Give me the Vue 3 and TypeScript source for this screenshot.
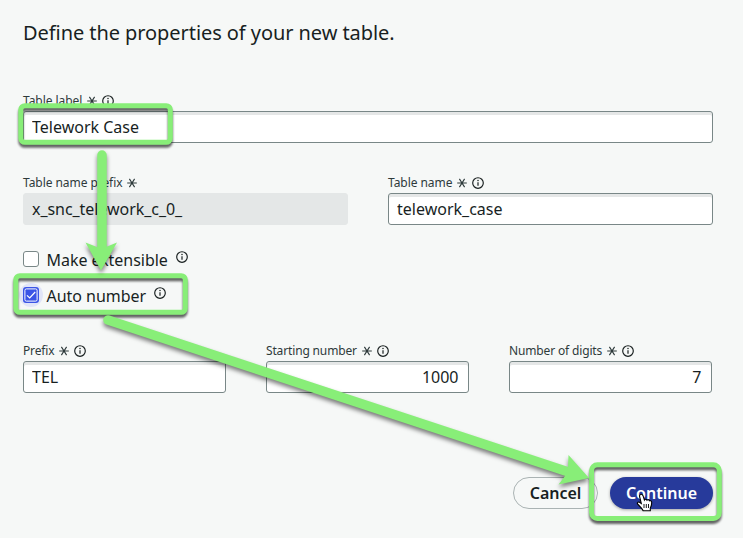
<script setup lang="ts">
import { reactive } from 'vue'

const form = reactive({
  label: 'Telework Case',
  namePrefix: 'x_snc_telework_c_0_',
  name: 'telework_case',
  extensible: false,
  autoNumber: true,
  prefix: 'TEL',
  start: '1000',
  digits: '7',
})
</script>

<template>
  <main class="page">
    <svg class="defs" width="0" height="0" aria-hidden="true">
      <symbol id="info" viewBox="0 0 12 12">
        <circle cx="6" cy="6" r="5.3" fill="none" stroke="currentColor" stroke-width="1.15" />
        <path d="M6 5.2V8.8" stroke="currentColor" stroke-width="1.2" />
        <circle cx="6" cy="3.6" r="0.75" fill="currentColor" />
      </symbol>
      <symbol id="star" viewBox="0 0 10 10">
        <path d="M.2 5H9.8M2.4 .9L7.6 9.1M7.6 .9L2.4 9.1" stroke="currentColor" stroke-width="1.1" fill="none" />
      </symbol>
    </svg>

    <h1>Define the properties of your new table.</h1>

    <div class="row first">
      <div class="field">
        <label class="caption">Table label<svg class="star"><use href="#star" /></svg><svg class="info"><use href="#info" /></svg></label>
        <input v-model="form.label" class="box" type="text" />
      </div>
    </div>

    <div class="row second">
      <div class="field">
        <label class="caption">Table name prefix<svg class="star"><use href="#star" /></svg></label>
        <input v-model="form.namePrefix" class="box locked" type="text" readonly />
      </div>
      <div class="field">
        <label class="caption">Table name<svg class="star"><use href="#star" /></svg><svg class="info"><use href="#info" /></svg></label>
        <input v-model="form.name" class="box" type="text" />
      </div>
    </div>

    <div class="checks">
      <div class="check">
        <span class="tick" role="checkbox" :aria-checked="form.extensible"></span>
        <span class="check-text">Make extensible</span>
        <svg class="info"><use href="#info" /></svg>
      </div>
      <div class="check">
        <span class="tick on" role="checkbox" :aria-checked="form.autoNumber">
          <svg viewBox="0 0 16 16" width="16" height="16">
            <rect x="1.9" y="1.9" width="12.2" height="12.2" rx="1.5" fill="none" stroke="#fff" stroke-width="1" />
            <path d="M4 8.3L6.7 11L12.2 5" fill="none" stroke="#fff" stroke-width="1.2" />
          </svg>
        </span>
        <span class="check-text">Auto number</span>
        <svg class="info"><use href="#info" /></svg>
      </div>
    </div>

    <div class="row third">
      <div class="field">
        <label class="caption tight">Prefix<svg class="star"><use href="#star" /></svg><svg class="info"><use href="#info" /></svg></label>
        <input v-model="form.prefix" class="box" type="text" />
      </div>
      <div class="field">
        <label class="caption tight">Starting number<svg class="star"><use href="#star" /></svg><svg class="info"><use href="#info" /></svg></label>
        <input v-model="form.start" class="box numeric" type="text" />
      </div>
      <div class="field">
        <label class="caption tight">Number of digits<svg class="star"><use href="#star" /></svg><svg class="info"><use href="#info" /></svg></label>
        <input v-model="form.digits" class="box numeric" type="text" />
      </div>
    </div>

    <footer class="actions">
      <button class="btn cancel" type="button">Cancel</button>
      <button class="btn primary" type="button">Continue</button>
    </footer>

    <svg class="overlay" viewBox="0 0 743 538" width="743" height="538" aria-hidden="true">
      <g class="marks">
        <rect x="20.8" y="105.7" width="149.5" height="36.6" rx="4" />
        <rect x="15.8" y="275.7" width="169.5" height="36.6" rx="4" />
        <rect x="591.5" y="464.8" width="127.8" height="53.6" rx="6" />
      </g>
      <g class="arrows">
        <path class="shaft" d="M102 155V252" />
        <path class="head" d="M101 270.5L85.5 242.5L97 247H106L117 242.5Z" />
        <path class="shaft" d="M108 320L570 472.5" />
        <path class="head" d="M589 478L568.5 455L568 467L565 476L558.5 484.5Z" />
      </g>
      <g transform="translate(635.5 493)">
        <path d="M4.8 1.6C6 .8 7.2 1.6 7.6 2.8L8.9 7C9.4 6 11 6 11.5 7.2C12.2 6.4 13.6 6.6 14 7.8C15 7.3 16.2 8 16.2 9.5C16.2 12 15.8 13.5 14.8 15V17.7H7.6C6.8 15.6 4.5 13.6 2.5 11.5C1 10 2.5 8.5 4 9.3L5.8 10.5L4.2 4C3.9 2.9 4 2.1 4.8 1.6Z" fill="#fff" stroke="#000" stroke-width="1.1" />
        <path d="M8.5 11V15M10.8 11V15M13 11V15" stroke="#000" stroke-width="0.9" />
      </g>
    </svg>
  </main>
</template>

<style>
body {
  margin: 0;
  background: #f6f8f7;
}
</style>

<style scoped>
.page {
  position: relative;
  box-sizing: border-box;
  width: 743px;
  height: 538px;
  padding: 19px 30px 0 23px;
  overflow: hidden;
  background: #f6f8f7;
  color: #181f1f;
  font-family: "Noto Sans", sans-serif;
}
.defs { position: absolute; }
h1 {
  margin: 0;
  font-size: 20px;
  line-height: 28px;
  font-weight: 400;
  letter-spacing: -0.07px;
}
.row { display: flex; }
.first { margin-top: 45px; }
.second { gap: 40px; margin-top: 31px; }
.third { gap: 40px; margin: 35px 1px 0 0; }
.field {
  flex: 1 1 0;
  min-width: 0;
  display: flex;
  flex-direction: column;
}
.caption {
  display: flex;
  align-items: center;
  height: 18px;
  margin-bottom: 1px;
  font-size: 12px;
  line-height: 18px;
  letter-spacing: -0.06px;
  color: #2e3a3b;
}
.tight { letter-spacing: -0.15px; }
.star { width: 10px; height: 10px; margin-left: 5px; }
.info { width: 12px; height: 12px; margin-left: 5px; color: #181f1f; }
.box {
  box-sizing: border-box;
  width: 100%;
  height: 32px;
  margin: 0;
  padding: 0 8px;
  border: 1px solid #798787;
  border-radius: 3px;
  outline: 0;
  background: #fff;
  box-shadow: inset 0 3px 0 #e5e7e7;
  color: #181f1f;
  font: 400 16px/24px "Noto Sans", sans-serif;
}
.locked {
  border-color: #e4e7e7;
  background: #e4e7e7;
  box-shadow: none;
  letter-spacing: -0.05px;
}
.numeric { padding-right: 9.5px; text-align: right; }
.checks {
  display: grid;
  gap: 12px;
  margin-top: 22px;
}
.check {
  display: flex;
  align-items: center;
  height: 24px;
}
.tick {
  box-sizing: border-box;
  width: 16px;
  height: 16px;
  border: 1px solid #798787;
  border-radius: 3px;
  background: #fff;
}
.on {
  position: relative;
  z-index: 0;
  display: flex;
  border: 0;
  background: none;
}
.on::before {
  content: "";
  position: absolute;
  z-index: -2;
  inset: -4px;
  border-radius: 50%;
  background: #e1e5f8;
}
.on::after {
  content: "";
  position: absolute;
  z-index: -1;
  inset: 0;
  border-radius: 3px;
  background: #3b55e6;
}
.check-text {
  margin-left: 7.5px;
  padding-top: 2px;
  font-size: 16px;
  line-height: 24px;
  letter-spacing: -0.04px;
}
.check .info { margin: 0 0 5px 8px; }
.actions {
  display: flex;
  justify-content: flex-end;
  gap: 12px;
  margin-top: 84px;
}
.btn {
  box-sizing: border-box;
  height: 32px;
  padding: 0 16px;
  border-radius: 16px;
  font: 600 16px/24px "Noto Sans", sans-serif;
}
.cancel {
  padding: 0 15.5px;
  border: 1px solid #aab3b3;
  background: transparent;
  color: #181f1f;
}
.primary {
  border: 0;
  background: #273a9b;
  box-shadow: 0 1px 3px rgba(0, 0, 0, 0.35);
  color: #fff;
}
.overlay {
  position: absolute;
  inset: 0;
  pointer-events: none;
}
.marks {
  fill: none;
  stroke: #88ee78;
  stroke-width: 5;
  filter: drop-shadow(0 3px 1px rgba(0, 0, 0, 0.6));
}
.arrows { filter: drop-shadow(0 3px 2px rgba(0, 0, 0, 0.5)); }
.shaft {
  fill: none;
  stroke: #88ee78;
  stroke-width: 9.5;
  stroke-linecap: round;
}
.head { fill: #88ee78; }
</style>
